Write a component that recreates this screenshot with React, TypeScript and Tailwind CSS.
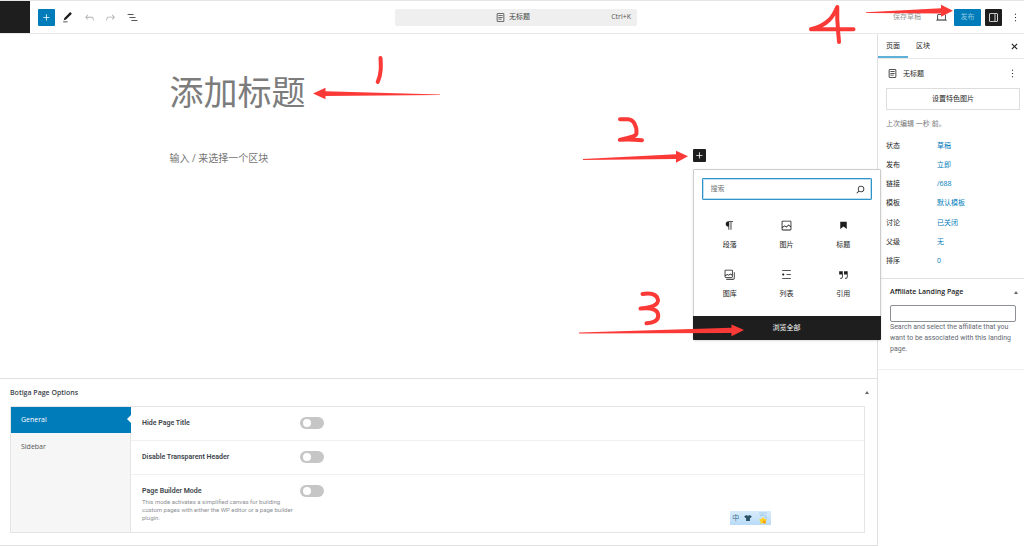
import React from "react";

const icons = {
  plus: "M11 12.5V17.5H12.5V12.5H17.5V11H12.5V6H11V11H6V12.5H11Z",
  pencil: "m20.1 5.1L16.9 2 6.2 12.7l-1.3 4.4 4.5-1.3L20.1 5.1zM4 20.8h8v-1.5H4v1.5z",
  undo: "M18.3 11.7c-.6-.6-1.4-.9-2.3-.9H6.7l2.9-3.3-1.1-1-4.5 5L8.5 16l1-1-2.7-2.7H16c.5 0 .9.2 1.3.5 1 1 1 3.4 1 4.5v.3h1.5v-.2c0-1.5 0-4.3-1.5-5.7z",
  redo: "M15.6 6.5l-1.1 1 2.9 3.3H8c-.9 0-1.7.3-2.3.9-1.4 1.5-1.4 4.2-1.4 5.6v.2h1.5v-.3c0-1.1 0-3.5 1-4.5.3-.3.7-.5 1.3-.5h9.2L14.5 15l1.1 1.1 4.6-4.6-4.6-5z",
  listView: "M3 6h11v1.5H3V6Zm3.5 5.5h11V13h-11v-1.5ZM21 17H10v1.5h11V17Z",
  page: "M7 5.5h10a.5.5 0 01.5.5v12a.5.5 0 01-.5.5H7a.5.5 0 01-.5-.5V6a.5.5 0 01.5-.5zM17 4H7a2 2 0 00-2 2v12a2 2 0 002 2h10a2 2 0 002-2V6a2 2 0 00-2-2zm-1 3.75H8v1.5h8v-1.5zM8 11h8v1.5H8V11zm6 3.25H8v1.5h6v-1.5z",
  laptop: "M20.5 16h-.7V8c0-1.1-.9-2-2-2H6.2c-1.1 0-2 .9-2 2v8h-.7c-.8 0-1.5.7-1.5 1.5h20c0-.8-.7-1.5-1.5-1.5zM5.7 8c0-.3.2-.5.5-.5h11.7c.3 0 .5.2.5.5v7.6H5.7V8z",
  drawer: "M18 4H6c-1.1 0-2 .9-2 2v12c0 1.1.9 2 2 2h12c1.1 0 2-.9 2-2V6c0-1.1-.9-2-2-2zm-4 14.5H6c-.3 0-.5-.2-.5-.5V6c0-.3.2-.5.5-.5h8v13zm4.5-.5c0 .3-.2.5-.5.5h-2.5v-13H18c.3 0 .5.2.5.5v12z",
  more: "M13 19h-2v-2h2v2zm0-6h-2v-2h2v2zm0-6h-2V5h2v2z",
  close: "M12 13.400l4.200 4.200 1.400-1.400-4.200-4.200 4.200-4.200-1.400-1.400-4.200 4.200-4.200-4.200-1.400 1.400 4.200 4.200-4.200 4.200 1.400 1.400z",
  search: "M13 5c-3.3 0-6 2.7-6 6 0 1.4.5 2.7 1.3 3.7l-3.8 3.8 1.1 1.1 3.8-3.8c1 .8 2.3 1.3 3.7 1.3 3.3 0 6-2.7 6-6S16.3 5 13 5zm0 10.5c-2.5 0-4.5-2-4.5-4.5s2-4.5 4.5-4.5 4.5 2 4.5 4.5-2 4.5-4.5 4.5z",
  paragraph: "m9.99609 14v-.2251l.00391.0001v6.225h1.5v-14.5h2.5v14.5h1.5v-14.5h3v-1.5h-8.50391c-2.76142 0-5 2.23858-5 5 0 2.7614 2.23858 5 5 5z",
  image: "M19 3H5c-1.1 0-2 .9-2 2v14c0 1.1.9 2 2 2h14c1.1 0 2-.9 2-2V5c0-1.1-.9-2-2-2zM5 4.5h14c.3 0 .5.2.5.5v8.4l-3-2.9c-.3-.3-.8-.3-1 0L11.9 14 9 12c-.3-.2-.6-.2-.8 0l-3.6 2.6V5c-.1-.3.1-.5.4-.5zm14 15H5c-.3 0-.5-.2-.5-.5v-2.4l4.1-3 3 1.9c.3.2.7.2.9-.1L16 12l3.5 3.4V19c0 .3-.2.5-.5.5z",
  heading: "M6 5V18.5911L12 13.8473L18 18.5911V5H6Z",
  gallery: "M16.375 4.5H4.625a.125.125 0 0 0-.125.125v8.254l2.859-1.54a.75.75 0 0 1 .68-.016l2.384 1.142 2.89-2.074a.75.75 0 0 1 .874 0l2.313 1.66V4.625a.125.125 0 0 0-.125-.125Zm.125 9.398-2.75-1.975-2.813 2.02a.75.75 0 0 1-.76.067l-2.444-1.17L4.5 14.583v1.792c0 .069.056.125.125.125h11.75a.125.125 0 0 0 .125-.125v-2.477ZM4.625 3C3.728 3 3 3.728 3 4.625v11.75C3 17.273 3.728 18 4.625 18h11.75c.898 0 1.625-.727 1.625-1.625V4.625C18 3.728 17.273 3 16.375 3H4.625ZM20 8v11c0 .69-.31 1-.999 1H6v1.5h13.001c1.52 0 2.499-.982 2.499-2.5V8H20Z",
  list: "M4 4v1.5h16V4H4zm8 8.5h8V11h-8v1.5zM4 20h16v-1.5H4V20zm4-8c0-1.1-.9-2-2-2s-2 .9-2 2 .9 2 2 2 2-.9 2-2z",
  quote: "M13 6v6h5.2v4c0 .8-.2 1.4-.5 1.7-.6.6-1.6.6-2.5.5h-.3v1.5h.5c1 0 2.3-.1 3.3-1 .6-.6 1-1.6 1-2.8V6H13zm-9 6h5.2v4c0 .8-.2 1.4-.5 1.7-.6.6-1.6.6-2.5.5h-.3v1.5h.5c1 0 2.3-.1 3.3-1 .6-.6 1-1.6 1-2.8V6H4v6z",
};

type IconName = keyof typeof icons;

function Icon({ name }: { name: IconName }) {
  return (
    <svg viewBox="0 0 24 24" className="size-[13px] shrink-0 fill-current" aria-hidden="true">
      <path d={icons[name]} fillRule="evenodd" />
    </svg>
  );
}

function IconButton({ name, label, className = "" }: { name: IconName; label: string; className?: string }) {
  return (
    <button
      type="button"
      aria-label={label}
      className={`flex size-[17px] shrink-0 items-center justify-center rounded-[1px] ${className}`}
    >
      <Icon name={name} />
    </button>
  );
}

function Header() {
  return (
    <header className="flex h-[34px] items-center border-t border-b border-t-[#e6e6e6] border-b-[#e8e8e8] bg-white">
      <div className="flex flex-1 items-center self-stretch">
        <div className="mr-2 w-[30px] self-stretch bg-[#1e1e1e]" />
        <IconButton name="plus" label="切换区块插入器" className="bg-[#007cba] text-white" />
        <div className="ml-1 flex w-[82px] justify-between">
          <IconButton name="pencil" label="工具" />
          <IconButton name="undo" label="撤销" className="text-[#b0b0b0]" />
          <IconButton name="redo" label="重做" className="text-[#b0b0b0]" />
          <IconButton name="listView" label="文档概览" />
        </div>
      </div>
      <button
        type="button"
        className="ml-2 grid h-[17px] w-[242px] grid-cols-[1fr_auto_1fr] items-center rounded-xs bg-[#efefef] px-1.5 text-[#555]"
      >
        <span />
        <span className="flex items-center gap-0.5 pr-2 text-[#444]">
          <Icon name="page" />
          无标题
        </span>
        <span className="text-right">Ctrl+K</span>
      </button>
      <div className="flex flex-1 items-center justify-end gap-1">
        <button type="button" className="mr-2 text-[#999]">
          保存草稿
        </button>
        <IconButton name="laptop" label="查看" />
        <button type="button" className="h-[17px] w-[27px] rounded-[1px] bg-[#007cba] text-[#8cc6e3]">
          发布
        </button>
        <IconButton name="drawer" label="设置" className="mr-px bg-[#1e1e1e] text-white" />
        <IconButton name="more" label="选项" />
      </div>
    </header>
  );
}

const blocks: { icon: IconName; name: string }[] = [
  { icon: "paragraph", name: "段落" },
  { icon: "image", name: "图片" },
  { icon: "heading", name: "标题" },
  { icon: "gallery", name: "图库" },
  { icon: "list", name: "列表" },
  { icon: "quote", name: "引用" },
];

function Inserter() {
  return (
    <div className="absolute top-5 left-0 z-20 w-[188px] rounded-[1px] border border-[#ccc] bg-white shadow-sm">
      <div className="mx-2 mt-2 flex h-[22px] items-center rounded-[1px] border border-[#2f93c8] px-1 text-[#1e1e1e] shadow-[inset_0_0_0_1px_#bfdff0]">
        <input
          type="text"
          placeholder="搜索"
          aria-label="搜索"
          className="h-4 min-w-0 flex-1 pl-1 leading-4 outline-none placeholder:text-[#757575]"
        />
        <Icon name="search" />
      </div>
      <div className="grid grid-cols-3 px-2 pt-2.5 pb-2">
        {blocks.map((b) => (
          <button key={b.name} type="button" className="flex h-[49px] flex-col items-center justify-center gap-2">
            <Icon name={b.icon} />
            <span className="leading-[10px]">{b.name}</span>
          </button>
        ))}
      </div>
      <button type="button" className="-mx-px -mb-px block h-6 w-[188px] rounded-b-[1px] bg-[#1e1e1e] text-white">
        浏览全部
      </button>
    </div>
  );
}

function Canvas() {
  return (
    <section className="flex-1 pt-[31px] pr-[26px] pl-6">
      <div className="mx-auto max-w-[536px]">
        <h1 className="text-[34px] leading-[54px] font-normal text-[#7c7c7c]">添加标题</h1>
        <div className="mt-[30px] flex items-start justify-between">
          <p className="text-[10px] leading-[18px] text-[#757575]">输入 / 来选择一个区块</p>
          <div className="relative">
            <button
              type="button"
              aria-label="添加区块"
              className="flex size-[13px] items-center justify-center rounded-[1px] bg-[#1e1e1e] text-white"
            >
              <Icon name="plus" />
            </button>
            <Inserter />
          </div>
        </div>
      </div>
    </section>
  );
}

const options = [
  { id: "hide-title", label: "Hide Page Title" },
  { id: "transparent-header", label: "Disable Transparent Header" },
  {
    id: "builder-mode",
    label: "Page Builder Mode",
    help: "This mode activates a simplified canvas for building custom pages with either the WP editor or a page builder plugin.",
  },
];

function PageOptions() {
  return (
    <section className="border-t border-b border-[#e0e0e0] pr-3 pb-3 pl-2.5">
      <button type="button" className="flex h-[27px] w-full items-center justify-between font-semibold text-[#3c434a]">
        Botiga Page Options
        <span className="mr-[-4px] size-0 border-x-2 border-b-[3px] border-x-transparent border-b-[#666]" />
      </button>
      <div className="flex border border-[#e5e5e5]">
        <nav className="flex w-[120px] flex-col border-r border-[#e5e5e5] bg-[#f6f6f6]">
          <button type="button" className="relative -mr-px h-[26px] bg-[#007cba] pl-2.5 text-left text-white">
            General
            <span className="absolute top-2 right-0 size-0 border-y-4 border-r-4 border-y-transparent border-r-white" />
          </button>
          <button type="button" className="h-[27px] pl-2.5 text-left text-[#555]">
            Sidebar
          </button>
        </nav>
        <div className="flex-1 divide-y divide-[#f0f0f0]">
          {options.map((o) => (
            <div key={o.id} className="flex items-start gap-1 px-[11px] py-2.5">
              <div className="w-[154px]">
                <label htmlFor={o.id} className="block font-[Roboto] leading-[13px] font-semibold text-[#3c434a]">
                  {o.label}
                </label>
                {o.help && <p className="font-[Roboto] text-[6px] leading-[8px] text-[#8c8f94]">{o.help}</p>}
              </div>
              <span className="relative flex h-[13px] w-6">
                <input
                  id={o.id}
                  type="checkbox"
                  role="switch"
                  className="peer h-3 w-6 appearance-none rounded-full bg-[#c6c6c6] checked:bg-[#007cba]"
                />
                <span className="pointer-events-none absolute top-0.5 left-[3px] size-2 rounded-full bg-white peer-checked:left-[13px]" />
              </span>
            </div>
          ))}
        </div>
      </div>
    </section>
  );
}

const summary = [
  ["状态", "草稿"],
  ["发布", "立即"],
  ["链接", "/688"],
  ["模板", "默认模板"],
  ["讨论", "已关闭"],
  ["父级", "无"],
  ["排序", "0"],
];

function Sidebar() {
  return (
    <aside className="w-[147px] shrink-0 border-l border-[#e0e0e0] bg-white text-[#1e1e1e]">
      <div className="flex h-[25px] items-stretch border-b border-[#e8e8e8] pr-px">
        <button type="button" className="border-b-2 border-[#5fb0d8] px-2 pt-0.5">
          页面
        </button>
        <button type="button" className="px-2">
          区块
        </button>
        <span className="flex-1" />
        <span className="flex items-center">
          <IconButton name="close" label="关闭设置" />
        </span>
      </div>
      <div className="pr-1 pl-2">
        <div className="flex h-[29px] items-center gap-1">
          <Icon name="page" />
          <span className="flex-1">无标题</span>
          <IconButton name="more" label="操作" className="-mr-px" />
        </div>
        <button type="button" className="block h-[22px] w-full border border-[#ddd]">
          设置特色图片
        </button>
        <p className="mt-2 leading-[11px] text-[#757575]">上次编辑 一秒 前。</p>
        <dl className="mt-[7px] grid h-[135px] grid-cols-[51px_1fr] grid-rows-7 items-center">
          {summary.map(([k, v]) => (
            <React.Fragment key={k}>
              <dt>{k}</dt>
              <dd>
                <button type="button" className="text-[#007cba]">
                  {v}
                </button>
              </dd>
            </React.Fragment>
          ))}
        </dl>
      </div>
      <div className="mt-[7px] border-t border-b border-t-[#e0e0e0] border-b-[#eee] pb-3.5 pl-3">
        <button type="button" className="flex h-[26px] w-full items-center justify-between pr-1.5 font-semibold">
          Affiliate Landing Page
          <span className="size-0 border-x-2 border-b-[3px] border-x-transparent border-b-[#666]" />
        </button>
        <input
          id="affiliate"
          type="text"
          className="block h-[17px] w-[126px] rounded-xs border border-[#8c8f94] px-1"
        />
        <label htmlFor="affiliate" className="block w-[126px] font-[Roboto] leading-[11px] text-[#646970]">
          Search and select the affiliate that you want to be associated with this landing page.
        </label>
      </div>
    </aside>
  );
}

function InputMethodBar() {
  return (
    <div className="absolute right-[253px] bottom-[21px] z-10 flex h-3.5 w-[41px] items-center justify-around bg-linear-to-b from-[#d8ebfb] to-[#b9dbf7] text-[#44708c]">
      <span>中</span>
      <svg viewBox="0 0 10 8" className="h-1.5 w-2 fill-[#2c5468]" aria-hidden="true">
        <path d="M3 0c.6 1.4 3.400 1.400 4 0l3 1.600-1.200 2.400L7.600 3.500V8H2.400V3.500L1.200 4 0 1.600z" />
      </svg>
      <svg viewBox="0 0 12 14" className="h-3.5 w-3" aria-hidden="true">
        <path d="M2 2h8M3 5c3-2 7-1 6 3" stroke="#a3cdec" strokeWidth="1.200" fill="none" />
        <path d="M6 6l1.600 2 2.400.6-1.400 1.800L8.500 13 6 12l-2.500 1 0-2.600L2 8.600 4.400 8z" fill="#ffd21f" />
        <path d="M6 9.500l3 .5-.8 2.500L6 12z" fill="#f59a1b" />
      </svg>
    </div>
  );
}

/* Hand-drawn step markers laid over the editor. */
function Markers() {
  return (
    <svg
      viewBox="0 0 1024 546"
      className="pointer-events-none absolute top-0 left-0 z-30 w-full"
      role="img"
      aria-label="步骤标注"
    >
      <g fill="#fb3a38">
        <path d="M313 93.500L325.500 87.700V91.300L440 94.400V95L325.500 96V99.300Z" />
        <path d="M688 156.300L676 150.800V154.200L583 159V160L676 159V162.800Z" />
        <path d="M744 330L731.500 324.500V327.800L579 332.600V333.600L731.500 333V336.300Z" />
        <path d="M953 10.700L941 4.700V8.300L866 12.200V13.100L941 13.500V16.700Z" />
      </g>
      <g fill="none" stroke="#fb3a38" strokeWidth="4" strokeLinecap="round" strokeLinejoin="round">
        <path d="M380.500 58C381 66 381.500 73 377.700 82" />
        <path d="M620 119.300H628C634 119.500 637 127 636.500 133C636 138 626 137.500 619.800 139.800C627 139 635 139.500 642 140.300" />
        <path d="M642.500 294C651 292.800 657 294 658 300C658.500 306 648 308 640.500 308.500C650 307.500 657.500 309 658.200 315C658.500 321 653 323 646.500 323.300" />
        <path d="M839 42C838.500 32 836.500 24 837.300 7C833 17 828 25 811 29.300H853.500" />
      </g>
    </svg>
  );
}

export default function App() {
  return (
    <div
      lang="zh-CN"
      className="relative flex min-h-screen flex-col overflow-hidden bg-white font-['Open_Sans','Noto_Sans_CJK_SC',sans-serif] text-[7px] leading-[10px] text-[#1e1e1e]"
    >
      <Header />
      <div className="flex flex-1">
        <main className="flex min-w-0 flex-1 flex-col">
          <Canvas />
          <PageOptions />
        </main>
        <Sidebar />
      </div>
      <InputMethodBar />
      <Markers />
    </div>
  );
}
